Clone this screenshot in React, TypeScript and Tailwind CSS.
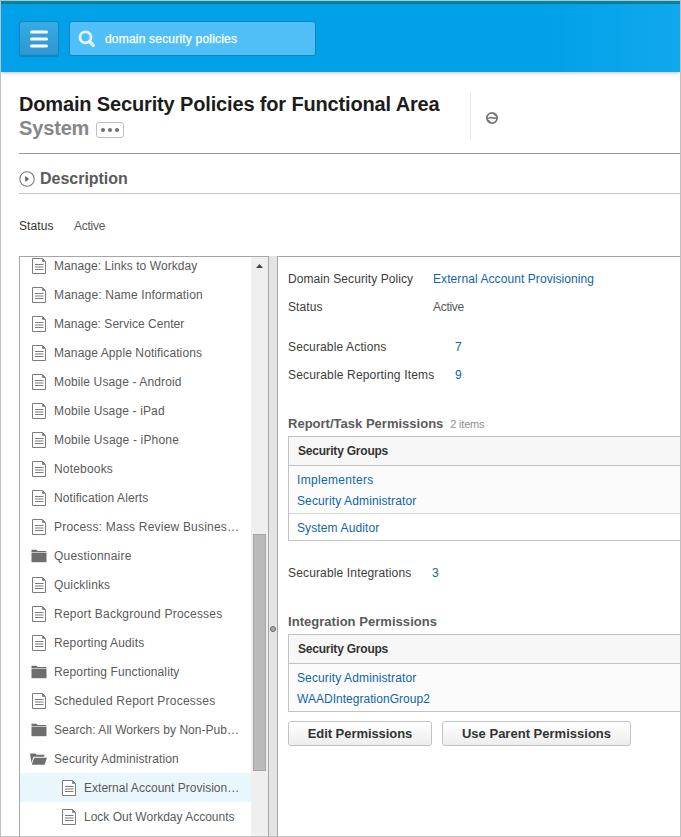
import type { ReactNode } from "react";
import clsx from "clsx";

type NodeKind = "doc" | "folder" | "open";

interface TreeNode {
  label: string;
  kind: NodeKind;
  child?: boolean;
  selected?: boolean;
  tracking?: string;
}

const nodes: TreeNode[] = [
  { label: "Manage: Links to Workday", kind: "doc", tracking: "tracking-[0.06px]" },
  { label: "Manage: Name Information", kind: "doc", tracking: "tracking-[0.14px]" },
  { label: "Manage: Service Center", kind: "doc", tracking: "tracking-[0.04px]" },
  { label: "Manage Apple Notifications", kind: "doc", tracking: "tracking-[0.1px]" },
  { label: "Mobile Usage - Android", kind: "doc", tracking: "tracking-[0.13px]" },
  { label: "Mobile Usage - iPad", kind: "doc", tracking: "tracking-[0.14px]" },
  { label: "Mobile Usage - iPhone", kind: "doc", tracking: "tracking-[0.17px]" },
  { label: "Notebooks", kind: "doc", tracking: "tracking-[0.18px]" },
  { label: "Notification Alerts", kind: "doc" },
  { label: "Process: Mass Review Busines…", kind: "doc", tracking: "tracking-[0.2px]" },
  { label: "Questionnaire", kind: "folder", tracking: "tracking-[0.22px]" },
  { label: "Quicklinks", kind: "doc", tracking: "tracking-[0.16px]" },
  { label: "Report Background Processes", kind: "doc", tracking: "tracking-[0.21px]" },
  { label: "Reporting Audits", kind: "doc", tracking: "tracking-[0.14px]" },
  { label: "Reporting Functionality", kind: "folder", tracking: "tracking-[0.12px]" },
  { label: "Scheduled Report Processes", kind: "doc", tracking: "tracking-[0.23px]" },
  { label: "Search: All Workers by Non-Pub…", kind: "folder", tracking: "tracking-[0.04px]" },
  { label: "Security Administration", kind: "open", tracking: "tracking-[0.12px]" },
  { label: "External Account Provision…", kind: "doc", child: true, selected: true, tracking: "tracking-[0.02px]" },
  { label: "Lock Out Workday Accounts", kind: "doc", child: true, tracking: "tracking-[0px]" },
];

function NodeIcon({ kind }: { kind: NodeKind }) {
  if (kind === "doc") {
    return (
      <svg className="ml-px mr-2 h-4 w-3.5 shrink-0" viewBox="0 0 14 16" fill="none" stroke="#7c7c7c">
        <path d="M.5.5h10l3 3v12H.5z" fill="#fff" />
        <path d="M10.5.8v2.7h2.7z" fill="#757575" strokeWidth=".7" />
        <path d="M3 6.5h8.5M3 9h8.5M3 11.5h8.5" strokeWidth="1.1" />
      </svg>
    );
  }
  if (kind === "folder") {
    return (
      <svg className="mr-[7px] h-3.5 w-4 shrink-0" viewBox="0 0 16 14" fill="#6e6e6e">
        <path d="M.5.8h5.2l.9 1.2h8.6v1.2H.5z" />
        <path d="M.5 3.8h15v9.4H.5z" />
      </svg>
    );
  }
  return (
    <svg className="-ml-px mr-[7px] h-3.5 w-[17px] shrink-0" viewBox="0 0 17 14" fill="#6e6e6e">
      <path d="M0 1.5h5.5l1 1.3h7.8v2H3.4L1.5 11z" />
      <path d="M4.2 5.7H17L14.6 12.7H1.7z" />
    </svg>
  );
}

function TreeRow({ node }: { node: TreeNode }) {
  return (
    <li
      className={clsx(
        "flex h-[29px] shrink-0 items-center whitespace-nowrap",
        node.child ? "pl-[41px]" : "pl-[11px]",
        node.selected && "bg-[#e9f7fc]",
      )}
    >
      <NodeIcon kind={node.kind} />
      <span className={node.tracking}>{node.label}</span>
    </li>
  );
}

function Field({ label, width, children }: { label: string; width: string; children: ReactNode }) {
  return (
    <div className="flex h-7 items-center whitespace-nowrap">
      <span className={clsx("shrink-0 text-[#3c3c3c]", width)}>{label}</span>
      {children}
    </div>
  );
}

function Link({ className, children }: { className?: string; children: ReactNode }) {
  return <a className={clsx("text-[#0f66a8]", className)}>{children}</a>;
}

function GroupHeader() {
  return (
    <div className="box-content h-7 border-b border-[#c2c2c2] bg-[#f7f7f7] pl-[9px] font-bold leading-7 tracking-[-0.22px] text-[#333]">
      Security Groups
    </div>
  );
}

function ActionButton({ className, children }: { className: string; children: ReactNode }) {
  return (
    <button
      className={clsx(
        "h-[25px] whitespace-nowrap rounded-[3px] border border-[#c3c3c3] bg-linear-to-b from-white to-[#ededed] text-[13px] font-bold text-[#333]",
        className,
      )}
    >
      {children}
    </button>
  );
}

export default function App() {
  return (
    <div className="flex h-[837px] w-[681px] flex-col overflow-hidden border border-[#c0c0c0] bg-white font-['Liberation_Sans',Arial,sans-serif] text-[12px] tracking-[0.08px] text-[#5a5a5a]">
      <div className="h-[3px] shrink-0 bg-[#0088a4]" />
      <header className="flex h-[68px] shrink-0 gap-2.5 bg-linear-to-r from-[#00a1e9] from-80% to-[#10a8ec] pl-[18px] pt-[17px] shadow-[0_1px_4px_rgba(0,0,0,0.25)]">
        <button className="flex h-[35px] w-10 items-center justify-center rounded-[3px] border border-[#1583bd] bg-linear-to-b from-[#36ace6] to-[#2f95d4] shadow-[0_1px_1px_rgba(0,0,0,0.15)]">
          <svg className="h-[18px] w-[18px]" viewBox="0 0 18 18" stroke="#fff" strokeWidth="3" strokeLinecap="round">
            <path d="M1.5 2h15M1.5 9h15M1.5 16h15" />
          </svg>
        </button>
        <div className="flex h-[35px] w-[247px] items-center rounded-[3px] border border-[#1285be] bg-[#50bff7] pl-2 text-white">
          <svg className="mr-[9px] h-[18px] w-[18px]" viewBox="0 0 18 18" fill="none" stroke="#e0f5ff">
            <circle cx="7.5" cy="7.3" r="5.5" strokeWidth="2.8" />
            <path d="M11.8 11.8l3.4 3.4" strokeWidth="3.4" strokeLinecap="round" />
          </svg>
          <span className="tracking-[0.2px] [-webkit-text-stroke:0.25px_white]">domain security policies</span>
        </div>
      </header>

      <section className="ml-[18px] flex h-[82px] shrink-0 border-b border-[#999] pt-5">
        <h1 className="w-[451px] shrink-0 whitespace-nowrap text-[20px] font-bold leading-6 tracking-[-0.15px] text-[#1c1c1c]">
          Domain Security Policies for Functional Area
          <span className="flex items-center text-[#868686]">
            System
            <span className="ml-[7px] mt-[3px] flex h-4 w-7 items-center justify-center gap-[3px] rounded-[3px] border border-[#bdbdbd] bg-white">
              <i className="h-1 w-1 rounded-full bg-[#707070]" />
              <i className="h-1 w-1 rounded-full bg-[#707070]" />
              <i className="h-1 w-1 rounded-full bg-[#707070]" />
            </span>
          </span>
        </h1>
        <div className="flex h-12 items-center border-l border-[#e8e8e8] pl-[15px] pt-1">
          <svg className="h-3 w-3" viewBox="0 0 12 12" fill="none">
            <circle cx="6" cy="6" r="5" stroke="#747474" strokeWidth="2" />
            <circle cx="6" cy="6" r="4.2" fill="#f4f4f4" />
            <path d="M1.5 6.2C3.2 6.6 4 5.2 5.4 5.6S8.4 6.6 10.5 5.8" stroke="#747474" strokeWidth="1.5" />
            <path d="M7.6 1.6l2.2 2.2M2.2 8.2l2.2 2.2" stroke="#747474" strokeWidth="1.2" />
          </svg>
        </div>
      </section>

      <h2 className="ml-[18px] flex h-10 shrink-0 items-center border-b border-[#c4c4c4] pt-2.5 text-[16px] font-bold tracking-[-0.02px] text-[#5a5a5a]">
        <svg className="mr-[5px] h-4 w-4" viewBox="0 0 16 16" fill="none">
          <circle cx="8" cy="8" r="7.2" stroke="#777" strokeWidth="1.1" />
          <path d="M6.2 5l4 3-4 3z" fill="#666" />
        </svg>
        Description
      </h2>

      <div className="ml-[18px] flex h-[62px] shrink-0 items-center pt-[2px]">
        <span className="w-[55px] text-[#333]">Status</span>
        <span className="tracking-[-0.25px]">Active</span>
      </div>

      <main className="ml-[18px] flex min-h-0 grow">
        <nav className="flex w-[250px] shrink-0 overflow-hidden border-x border-t border-[#a6a6a6]">
          <ul className="-mt-1.5 flex w-[231px] shrink-0 flex-col">
            {nodes.map((node) => (
              <TreeRow key={node.label} node={node} />
            ))}
          </ul>
          <div className="flex w-[17px] flex-col items-center bg-[#efefef] pt-[7px]">
            <svg className="h-1 w-[7px] shrink-0" viewBox="0 0 7 4" fill="#444">
              <path d="M3.5 0L7 4H0z" />
            </svg>
            <div className="mt-[266px] h-[237px] w-[13px] shrink-0 border border-[#a6a6a6] bg-[#bababa]" />
          </div>
        </nav>
        <div className="flex w-2 shrink-0 justify-center bg-[#e4e4e4] pt-[370px]">
          <span className="h-1.5 w-1.5 shrink-0 rounded-full border border-[#666] bg-[#aaa]" />
        </div>
        <div className="min-w-0 grow border-l border-t border-[#a6a6a6] pl-2.5">
          <div className="pt-2">
            <Field label="Domain Security Policy" width="w-[145px]">
              <Link>External Account Provisioning</Link>
            </Field>
            <Field label="Status" width="w-[145px]">
              <span className="tracking-[-0.3px]">Active</span>
            </Field>
          </div>
          <div className="pt-3">
            <Field label="Securable Actions" width="w-[167px] tracking-[0.14px]"><Link>7</Link></Field>
            <Field label="Securable Reporting Items" width="w-[167px] tracking-[0.17px]"><Link>9</Link></Field>
          </div>
          <div className="flex h-[47px] items-end pb-1">
            <h3 className="text-[13px] font-bold leading-[17px] tracking-[0.01px]">Report/Task Permissions</h3>
            <span className="ml-[7px] text-[11px] leading-4 tracking-[-0.2px] text-[#909090]">2 items</span>
          </div>
          <div className="border-y border-l border-[#c2c2c2]">
            <GroupHeader />
            <div className="flex h-[48px] flex-col border-b border-[#dadada] bg-[#fbfbfb] pl-2 pt-1 leading-[21px]">
              <Link className="tracking-[0.32px]">Implementers</Link>
              <Link className="tracking-[0.12px]">Security Administrator</Link>
            </div>
            <div className="h-[26px] pl-2 leading-[28px]"><Link className="tracking-[0.12px]">System Auditor</Link></div>
          </div>
          <div className="pt-[18px]">
            <Field label="Securable Integrations" width="w-[144px] tracking-[0.15px]"><Link>3</Link></Field>
          </div>
          <h3 className="flex h-[47px] items-end pb-1 text-[13px] font-bold leading-[17px] tracking-[0.04px]">Integration Permissions</h3>
          <div className="border-y border-l border-[#c2c2c2]">
            <GroupHeader />
            <div className="flex h-[47px] flex-col bg-[#fbfbfb] pl-2 pt-1 leading-[21px]">
              <Link className="tracking-[0.12px]">Security Administrator</Link>
              <Link className="tracking-[0.03px]">WAADIntegrationGroup2</Link>
            </div>
          </div>
          <div className="flex gap-2.5 pt-[9px]">
            <ActionButton className="w-36 tracking-[-0.06px]">Edit Permissions</ActionButton>
            <ActionButton className="w-[189px] tracking-[0.01px]">Use Parent Permissions</ActionButton>
          </div>
        </div>
      </main>
    </div>
  );
}
